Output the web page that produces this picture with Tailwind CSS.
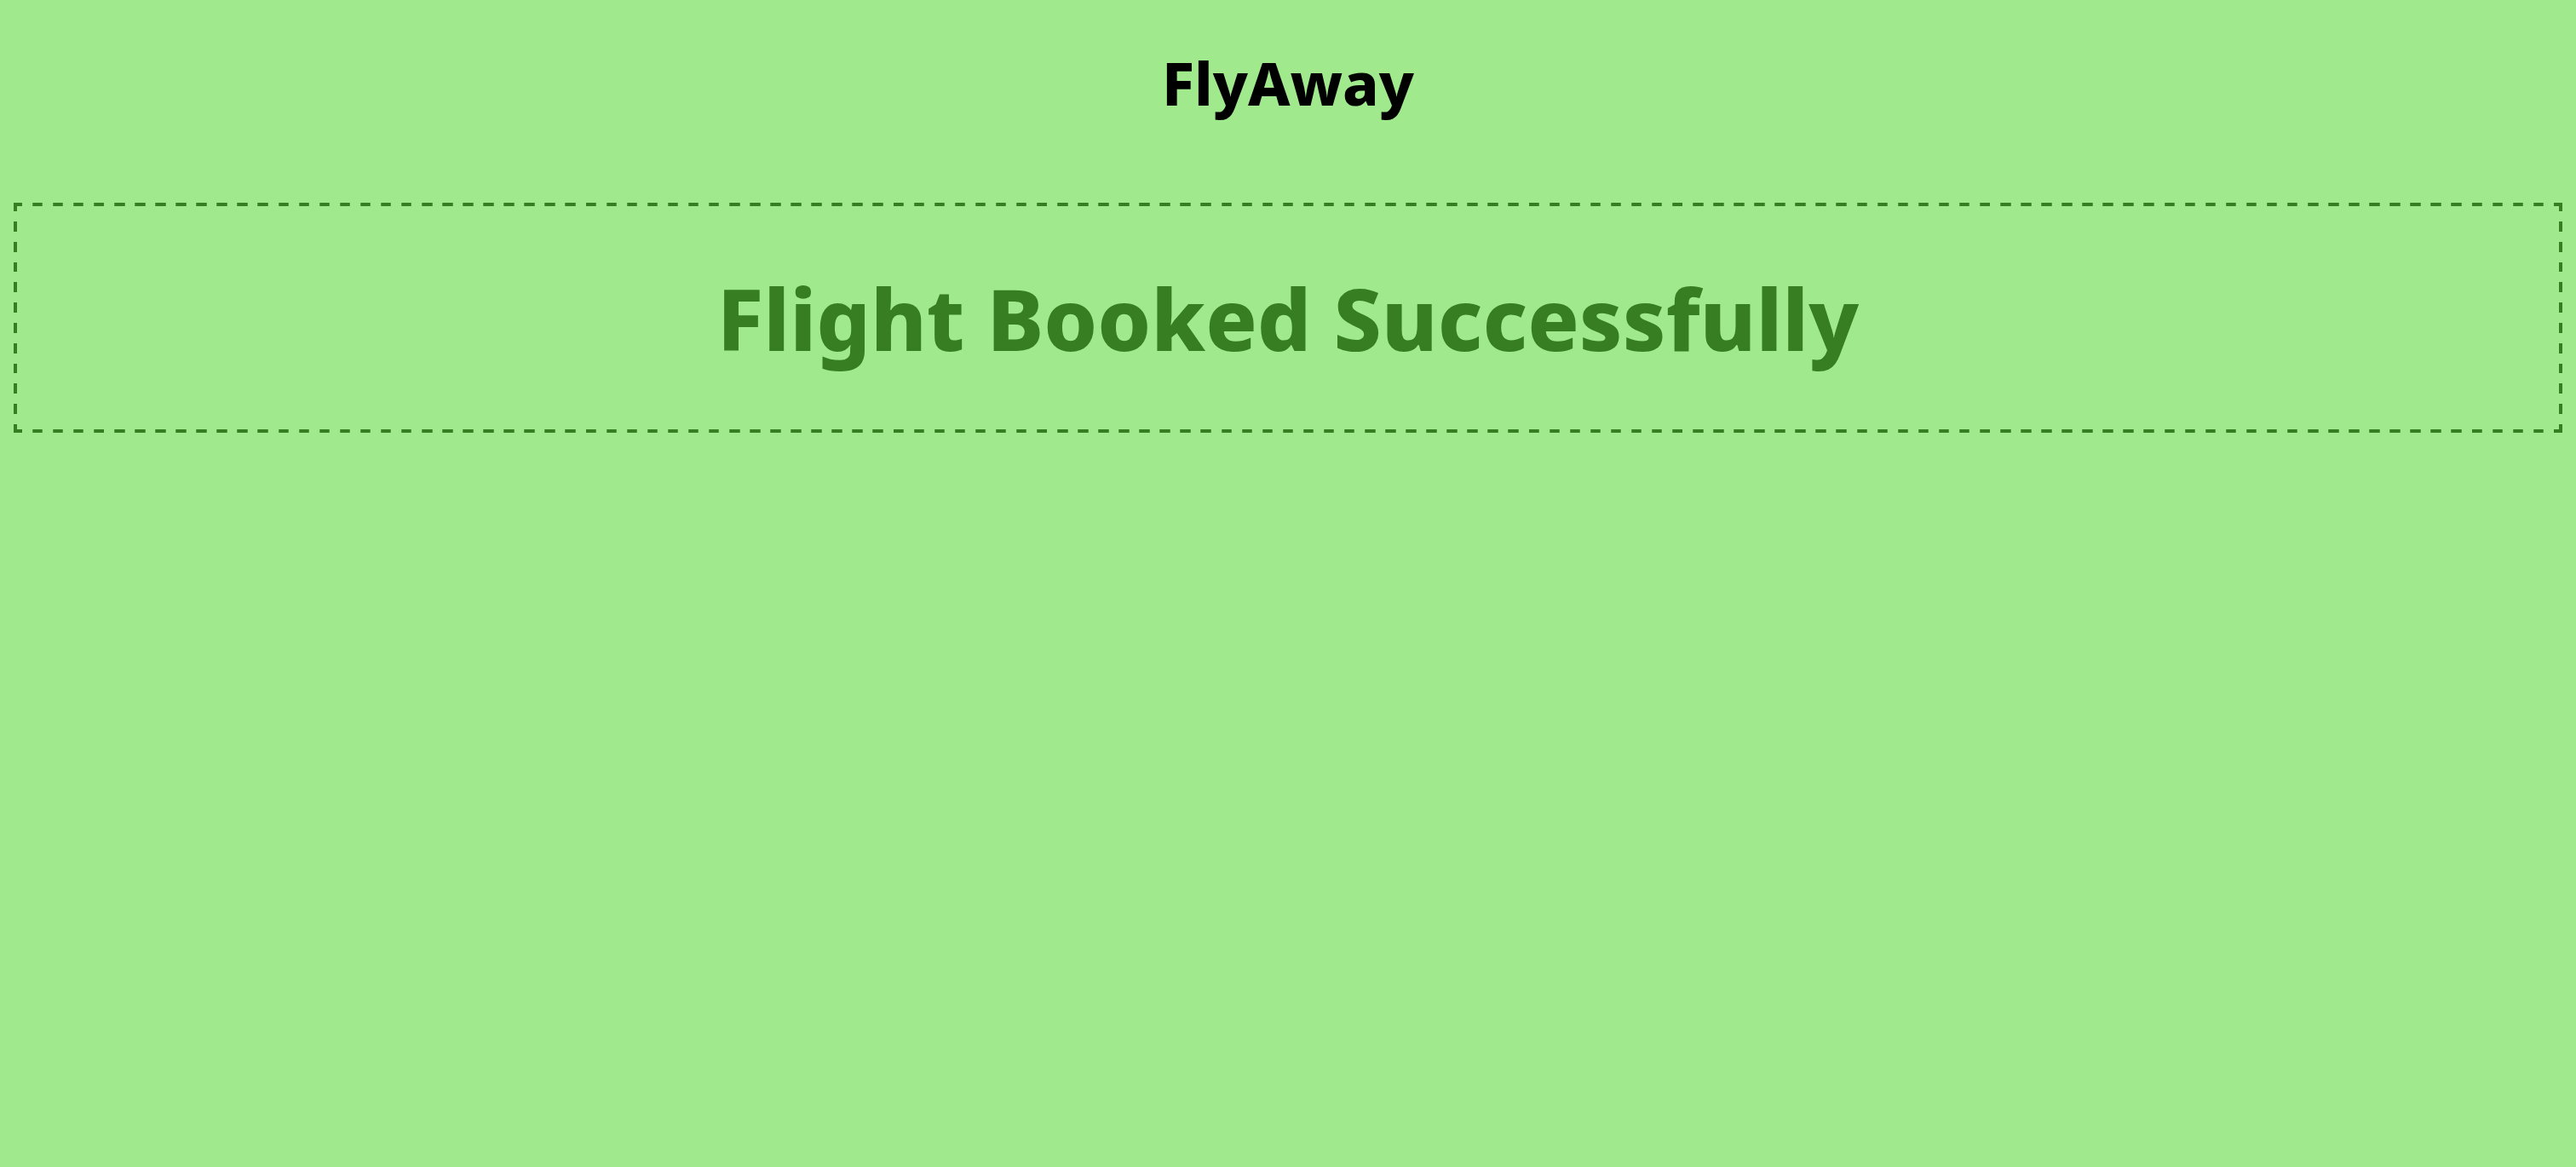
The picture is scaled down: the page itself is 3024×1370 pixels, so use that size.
<!DOCTYPE html>
<html lang="en">
<head>
<meta charset="utf-8">
<title>FlyAway</title>
<script src="https://cdn.jsdelivr.net/npm/@tailwindcss/browser@4"></script>
</head>
<body class="min-h-screen bg-[#a0ea8d] p-4 text-center font-['Noto_Sans',sans-serif] font-extrabold">
<header class="pt-9 pb-24">
<h1 class="text-[70px] leading-[90px] text-black">FlyAway</h1>
</header>
<main class="border-4 border-dashed border-[#377e22] py-16 [border-image:url(data:image/svg+xml,%3Csvg%20xmlns=%27http://www.w3.org/2000/svg%27%20width=%2756%27%20height=%2756%27%20fill=%27%23377e22%27%3E%3Cpath%20d=%27M0%200h10v4h-6v6h-4zM46%200h10v10h-4v-6h-6zM0%2046h4v6h6v4h-10zM52%2046h4v10h-10v-4h6zM22%200h12v4h-12zM22%2052h12v4h-12zM0%2022h4v12h-4zM52%2022h4v12h-4z%27/%3E%3C/svg%3E)_16_/_16px_round]">
<h2 class="text-[100px] leading-[134px] text-[#377e22]">Flight Booked Successfully</h2>
</main>
</body>
</html>
